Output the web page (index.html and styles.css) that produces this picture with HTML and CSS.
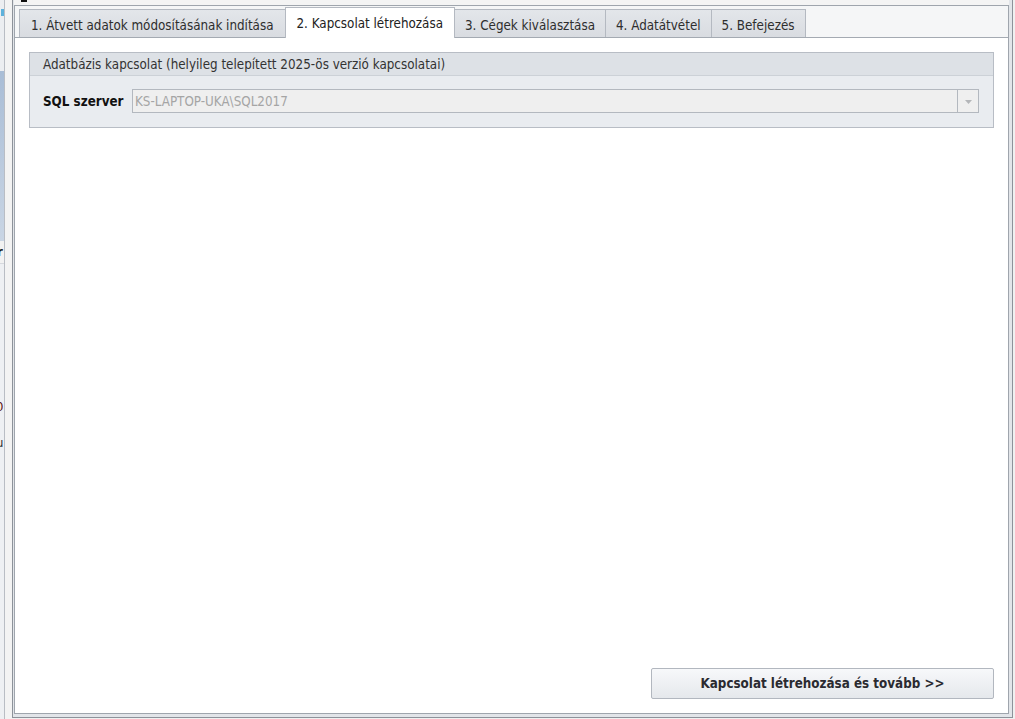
FILE: index.html
```html
<!DOCTYPE html>
<html lang="hu">
<head>
<meta charset="utf-8">
<title>Adatátvétel</title>
<link rel="stylesheet" href="styles.css">
</head>
<body>
<div class="screen">
  <div class="bgwin">
    <div class="bg-a"><span class="bg-blue"></span></div>
    <div class="bg-b"></div>
    <div class="bg-c"><span class="bg-letter bold">r</span></div>
    <div class="bg-d">
      <span class="bg-letter l0">0</span>
      <span class="bg-letter lu">u</span>
    </div>
  </div>
  <div class="bgline"></div>
  <div class="bggap"></div>
  <div class="dialog">
    <div class="dlg-top"><span class="caret"></span></div>
    <div class="frame">
      <div class="tabs">
        <div class="tab">1. Átvett adatok módosításának indítása</div>
        <div class="tab active">2. Kapcsolat létrehozása</div>
        <div class="tab">3. Cégek kiválasztása</div>
        <div class="tab">4. Adatátvétel</div>
        <div class="tab">5. Befejezés</div>
      </div>
      <div class="page">
        <div class="group">
          <div class="group-head">Adatbázis kapcsolat (helyileg telepített 2025-ös verzió kapcsolatai)</div>
          <div class="group-body">
            <span class="lbl">SQL szerver</span>
            <div class="combo">
              <span class="combo-text">KS-LAPTOP-UKA\SQL2017</span>
              <span class="combo-btn">
                <svg width="7" height="4" viewBox="0 0 7 4"><path d="M0 0H7L3.5 4Z" fill="#b4b6b9"/></svg>
              </span>
            </div>
          </div>
        </div>
        <div class="actions">
          <button class="btn">Kapcsolat létrehozása és tovább &gt;&gt;</button>
        </div>
      </div>
    </div>
  </div>
</div>
</body>
</html>
```

FILE: styles.css
```css
* { box-sizing: border-box; }
html, body { margin: 0; padding: 0; }
body {
  background: #f0f0f0;
  font-family: "DejaVu Sans Condensed", "DejaVu Sans", sans-serif;
  font-stretch: condensed;
  font-size: 13.3px;
  color: #2b2b2b;
}
.screen {
  width: 1015px;
  height: 719px;
  display: flex;
  overflow: hidden;
  background: #f0f0f0;
}

/* background window strip */
.bgwin {
  width: 4px;
  height: 719px;
  display: flex;
  flex-direction: column;
  overflow: hidden;
}
.bg-a { height: 71px; background: #eceef1; padding-top: 9px; }
.bg-blue { display: block; width: 3px; height: 7px; background: #5eb2dc; margin-left: 1px; }
.bg-b { height: 170px; background: linear-gradient(#a9bdd6, #c9d5e4); }
.bg-c { height: 23px; background: #f2f2f2; border-bottom: 1px solid #d6d9de; overflow: hidden; padding-top: 3px; }
.bg-d { flex: 1; background: #eef0f3; overflow: hidden; padding-top: 135px; }
.bg-letter { display: block; margin-left: -4px; font-size: 13px; line-height: 15px; color: #111; }
.bg-letter.bold { font-weight: bold; margin-left: -3px; }
.l0 { color: #5a1010; height: 36px; }
.lu { color: #333; }
.bgline { width: 1px; background: #b9bdc4; }
.bggap { width: 7px; background: #f3f3f3; }

/* dialog */
.dialog {
  width: 1001px;
  height: 718px;
  border-left: 1px solid #8d929a;
  border-right: 1px solid #8d929a;
  border-bottom: 1px solid #8d929a;
  padding: 0 3px 3px 1px;
  background: #e2e5e9;
  display: flex;
  flex-direction: column;
}
.dlg-top {
  height: 5px;
  background: #f4f4f4;
  padding-left: 7px;
}
.caret { display: block; width: 6px; height: 2px; background: #111; }

.frame {
  flex: 1;
  border: 1px solid #9fa5ad;
  display: flex;
  flex-direction: column;
  background: #f5f6f7;
}
.tabs {
  height: 32px;
  border-bottom: 1px solid #a4aab2;
  display: flex;
  align-items: flex-end;
  padding-left: 4px;
}
.tab {
  height: 28px;
  padding: 3px 11px 0 11px;
  border: 1px solid #b4b9c1;
  border-bottom: none;
  background: linear-gradient(#e3e6ea, #d9dce1);
  display: flex;
  align-items: center;
  white-space: nowrap;
  color: #2e2e2e;
}
.tab:nth-child(n+3) { padding-left: 10px; padding-right: 10px; }
.tab + .tab { margin-left: -1px; }
.tab.active {
  height: 31px;
  margin-bottom: -1px;
  padding-top: 1px;
  background: #ffffff;
  color: #222;
  position: relative;
  z-index: 1;
}

.page {
  flex: 1;
  background: #ffffff;
  padding: 14px;
  display: flex;
  flex-direction: column;
}
.group {
  border: 1px solid #b8bdc5;
  background: #e9ecf0;
}
.group-head {
  height: 23px;
  background: #dde1e6;
  border-bottom: 1px solid #ccd1d7;
  padding-left: 13px;
  display: flex;
  align-items: center;
  color: #333;
}
.group-body {
  height: 51px;
  padding: 13px 14px 14px 13px;
  display: flex;
  align-items: center;
  gap: 7px;
}
.lbl {
  width: 82px;
  font-weight: bold;
  color: #111;
  white-space: nowrap;
  padding-top: 1px;
}
.combo {
  flex: 1;
  height: 24px;
  border: 1px solid #b3b8bf;
  background: #efefef;
  display: flex;
  align-items: stretch;
}
.combo-text {
  flex: 1;
  padding-left: 2px;
  color: #a5a5a5;
  display: flex;
  align-items: center;
}
.combo-btn {
  width: 21px;
  border-left: 1px solid #b3b8bf;
  display: flex;
  align-items: center;
  justify-content: center;
  padding-top: 1px;
}

.actions {
  margin-top: auto;
  display: flex;
  justify-content: flex-end;
}
.btn {
  width: 343px;
  height: 31px;
  border: 1px solid #b2b7bf;
  border-radius: 2px;
  background: linear-gradient(#f7f8fa, #e5e8ec);
  font-family: "DejaVu Sans Condensed", "DejaVu Sans", sans-serif;
  font-stretch: condensed;
  font-size: 13.3px;
  font-weight: bold;
  color: #2a2a30;
  padding: 0;
}
```
